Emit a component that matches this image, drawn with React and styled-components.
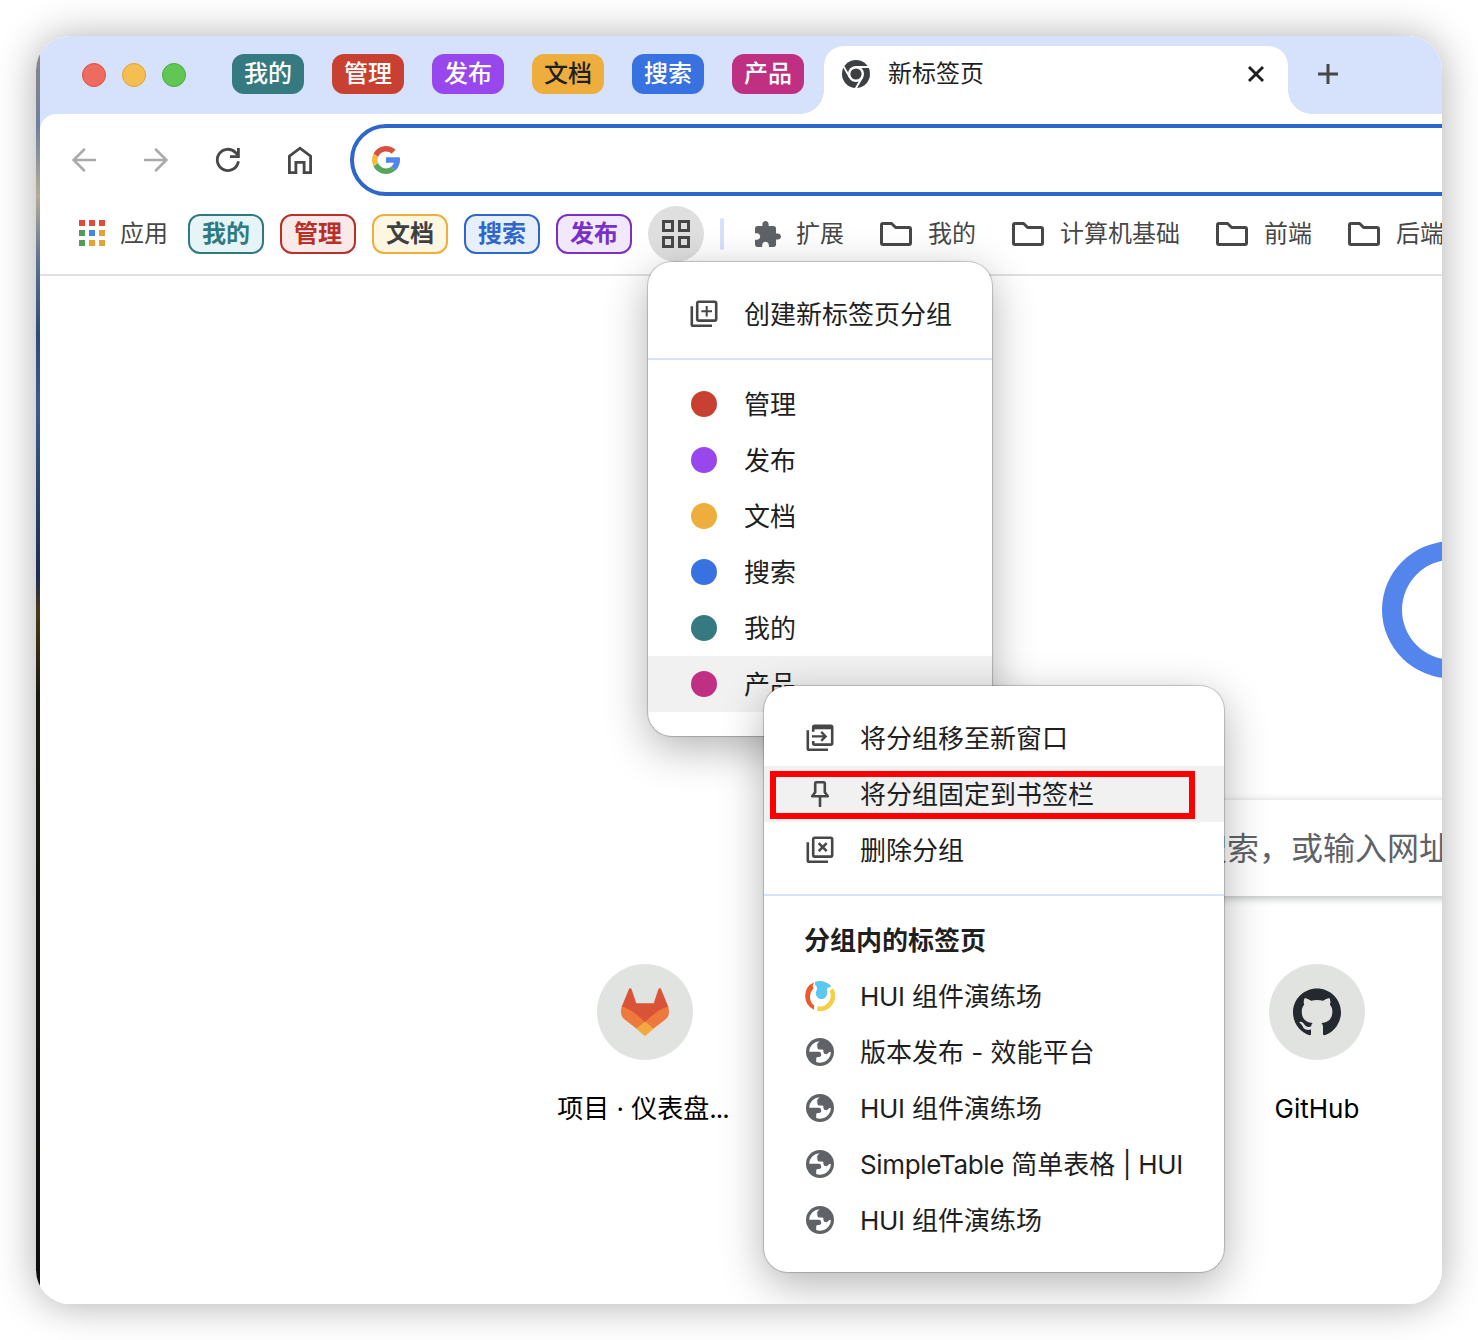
import React from "react";
import styled, { createGlobalStyle, css } from "styled-components";

const GlobalStyle = createGlobalStyle`
  *, *::before, *::after { box-sizing: border-box; }
  body {
    margin: 0;
    background: #fff;
    font-family: Inter, "Noto Sans CJK SC", sans-serif;
    color: #1f1f1f;
  }
  svg { display: block; flex: none; }
`;

const groups = {
  mine: { name: "我的", solid: "#357a80", line: "#2f7a80", text: "#2f7a80", tint: "#e6f4f8" },
  manage: { name: "管理", solid: "#c84031", line: "#b93028", text: "#b93028", tint: "#f9e9e8" },
  release: { name: "发布", solid: "#9747eb", line: "#7830c6", text: "#7830c6", tint: "#f2e8fb" },
  docs: { name: "文档", solid: "#edae3e", line: "#edae3e", text: "#3c4043", tint: "#fdf6e1", ink: "#1f1f1f" },
  search: { name: "搜索", solid: "#3871e0", line: "#2f66cc", text: "#2f66cc", tint: "#e8effc" },
  product: { name: "产品", solid: "#c03082", line: "#c03082", text: "#c03082", tint: "#fbe8f3" },
};

const Desktop = styled.div`
  height: 1340px;
  padding: 36px;
  overflow: hidden;
`;

const WindowFrame = styled.div`
  position: relative;
  width: 1406px;
  height: 1268px;
  padding-left: 4px;
  border-radius: 34px;
  overflow: hidden;
  background: linear-gradient(
    to bottom,
    #85888a 20px, #6f7f9c 90px, #b5ac98 160px, #5e718f 225px, #2d4a7c 300px,
    #3b5c8f 370px, #1c2d55 540px, #4a3a18 575px, #1c1a10 660px, #14140f 900px, #0c0e0b
  ) 0 0 / 4px 100% no-repeat;
`;

const WindowShadow = styled.div`
  width: 1406px;
  border-radius: 34px;
  box-shadow: 0 1px 40px rgba(0, 0, 0, 0.32);
`;

const Browser = styled.div`
  display: flex;
  flex-direction: column;
  width: 1402px;
  height: 100%;
  background: #fff;
`;

const TabStrip = styled.div`
  display: flex;
  flex: none;
  height: 78px;
  padding-left: 42px;
  background: #d6e1fc;
`;

const TrafficLights = styled.div`
  display: flex;
  gap: 16px;
  padding-top: 27px;
  margin-right: 46px;
`;

const Light = styled.span`
  width: 24px;
  height: 24px;
  border-radius: 50%;
  background: ${(p) => p.$fill};
  border: 1px solid ${(p) => p.$edge};
`;

const GroupChips = styled.div`
  display: flex;
  gap: 28px;
  padding-top: 18px;
  margin-right: 20px;
`;

const TabChip = styled.div`
  width: 72px;
  height: 40px;
  border-radius: 12px;
  background: ${(p) => p.$bg};
  color: ${(p) => p.$ink || "#fff"};
  font-size: 24px;
  font-weight: 500;
  line-height: 39px;
  text-align: center;
`;

const ActiveTab = styled.div`
  position: relative;
  display: flex;
  align-items: center;
  width: 464px;
  height: 68px;
  margin-top: 10px;
  padding: 0 22px 12px 18px;
  border-radius: 20px 20px 0 0;
  background: #fff;

  &::before, &::after {
    content: "";
    position: absolute;
    bottom: 0;
    width: 24px;
    height: 24px;
  }
  &::before {
    left: -24px;
    background: radial-gradient(circle at 0 0, transparent 23.5px, #fff 24.2px);
  }
  &::after {
    right: -24px;
    background: radial-gradient(circle at 100% 0, transparent 23.5px, #fff 24.2px);
  }
`;

const TabTitle = styled.span`
  flex: 1;
  margin-left: 18px;
  font-size: 24px;
  line-height: 36px;
`;

const NewTab = styled.div`
  padding: 28px 0 0 30px;
`;

const Chrome = styled.div`
  flex: none;
  background: #d6e1fc;
`;

const ToolbarArea = styled.div`
  height: 162px;
  border-radius: 16px 0 0 0;
  background: #fff;
  border-bottom: 2px solid #e0e0e0;
`;

const NavRow = styled.div`
  display: flex;
  align-items: center;
  height: 92px;
  padding-left: 28px;
`;

const NavIcons = styled.div`
  display: flex;
  gap: 40px;
  margin-right: 34px;
`;

const Omnibox = styled.div`
  display: flex;
  align-items: center;
  flex: none;
  width: 1200px;
  height: 72px;
  padding-left: 18px;
  border: 4px solid #2f66cc;
  border-radius: 36px;
  background: #fff;
`;

const BookmarksBar = styled.div`
  display: flex;
  align-items: center;
  height: 56px;
  padding-left: 38px;
  white-space: nowrap;
`;

const BookmarkLabel = styled.span`
  flex: none;
  margin-left: ${(p) => p.$gap || 16}px;
  margin-right: ${(p) => p.$after || 36}px;
  font-size: 24px;
  line-height: 36px;
  color: #474747;
`;

const SavedChips = styled.div`
  display: flex;
  flex: none;
  gap: 16px;
`;

const SavedChip = styled.div`
  width: 76px;
  height: 40px;
  border: 2px solid ${(p) => p.$line};
  border-radius: 12px;
  background: ${(p) => p.$bg};
  color: ${(p) => p.$ink};
  font-size: 24px;
  font-weight: 600;
  line-height: 35px;
  text-align: center;
`;

const EverythingButton = styled.div`
  display: grid;
  place-items: center;
  flex: none;
  width: 56px;
  height: 56px;
  margin: 0 16px;
  border-radius: 50%;
  background: #dfdfdf;
`;

const BarDivider = styled.span`
  flex: none;
  width: 4px;
  height: 32px;
  margin-right: 31px;
  border-radius: 2px;
  background: #d6e1fc;
`;

const Page = styled.div`
  flex: 1;
  display: flex;
  flex-direction: column;
  padding-top: 264px;
`;

const LogoRow = styled.div`
  height: 260px;
  padding-left: 1340px;
`;

const SearchBox = styled.div`
  display: flex;
  align-items: center;
  justify-content: flex-end;
  flex: none;
  width: 631px;
  height: 96px;
  margin-left: 780px;
  padding-bottom: 4px;
  background: #fff;
  box-shadow: 0 2px 8px rgba(32, 33, 36, 0.32);
  font-size: 32px;
  color: #5f6368;
  white-space: nowrap;
`;

const Shortcuts = styled.div`
  display: grid;
  grid-template-columns: 224px 224px;
  column-gap: 448px;
  margin: 68px 0 0 493px;
`;

const Shortcut = styled.div`
  display: flex;
  flex-direction: column;
  align-items: center;
  gap: 30px;
  font-size: 26px;
  line-height: 38px;
  color: #000;
`;

const ShortcutLabel = styled.span`
  padding-right: ${(p) => (p.$clipped ? 4 : 0)}px;
`;

const Ellipsis = styled.span`
  letter-spacing: -1px;
`;

const ShortcutIcon = styled.div`
  display: grid;
  place-items: center;
  width: 96px;
  height: 96px;
  border-radius: 50%;
  background: #e1e3e1;
`;

const menuBox = css`
  position: absolute;
  padding: 24px 0;
  border-radius: 24px;
  background: #fff;
  box-shadow: 0 0 1px 1px rgba(0, 0, 0, 0.2), 0 12px 44px rgba(0, 0, 0, 0.3);
`;

const GroupsMenu = styled.div`
  ${menuBox}
  left: 612px;
  top: 226px;
  width: 344px;
`;

const GroupSubmenu = styled.div`
  ${menuBox}
  left: 728px;
  top: 650px;
  width: 460px;
`;

const MenuItem = styled.div`
  display: flex;
  align-items: center;
  height: 56px;
  padding-left: 40px;
  background: ${(p) => (p.$hover ? "#f1f1f1" : "transparent")};
`;

const IconSlot = styled.span`
  display: grid;
  place-items: center;
  width: 32px;
  margin-right: 24px;
`;

const MenuText = styled.span`
  padding-top: 2px;
  font-size: 26px;
  line-height: 38px;
  white-space: nowrap;
`;

const MenuHeading = styled(MenuText)`
  font-weight: 700;
`;

const Latin = styled.span`
  letter-spacing: -0.36px;
`;

const Dot = styled.span`
  width: 26px;
  height: 26px;
  border-radius: 50%;
  background: ${(p) => p.$color};
`;

const MenuDivider = styled.div`
  height: 2px;
  margin: 16px 0;
  background: #d6e1fc;
`;

const Highlight = styled.div`
  position: absolute;
  left: 6px;
  top: 85px;
  width: 425px;
  height: 48px;
  border: 6px solid #ff0000;
`;

const ChromeMark = () => (
  <svg width="28" height="28" viewBox="0 0 28 28">
    <circle cx="14" cy="14" r="14" fill="#3c4043" />
    <circle cx="14" cy="14" r="8" fill="#fff" />
    <g stroke="#fff" strokeWidth="1.9">
      <path d="M14 7H28" />
      <path d="M14 7H28" transform="rotate(120 14 14)" />
      <path d="M14 7H28" transform="rotate(240 14 14)" />
    </g>
    <circle cx="14" cy="14" r="5.6" fill="#3c4043" />
  </svg>
);

const CloseIcon = () => (
  <svg width="20" height="20" viewBox="0 0 20 20" stroke="#1f1f1f" strokeWidth="2.9">
    <path d="M3 3L17 17M17 3L3 17" />
  </svg>
);

const PlusIcon = () => (
  <svg width="20" height="20" viewBox="0 0 20 20" stroke="#474747" strokeWidth="3">
    <path d="M10 0V20M0 10H20" />
  </svg>
);

const ArrowIcon = ({ flip }) => (
  <svg width="32" height="32" viewBox="0 0 32 32" fill="none" stroke="#a9a9a9" strokeWidth="2.7">
    <g transform={flip ? "rotate(180 16 16)" : undefined}>
      <path d="M28 16H6M16.800 4.900L5.700 16L16.800 27.100" />
    </g>
  </svg>
);

const ReloadIcon = () => (
  <svg width="32" height="32" viewBox="0 0 32 32" fill="none" stroke="#474747" strokeWidth="2.800">
    <path d="M26.400 17.300A10.600 10.600 0 1 1 23.500 8.500L26 11.400" />
    <path d="M26.400 4V12.600H18" />
  </svg>
);

const HomeIcon = () => (
  <svg width="32" height="32" viewBox="0 0 32 32" fill="none" stroke="#474747" strokeWidth="2.800">
    <path d="M5.400 28.600V12.200L16 4.200L26.600 12.200V28.600H20.100V18.300H11.900V28.600Z" />
  </svg>
);

const GoogleMark = () => (
  <svg width="28" height="28" viewBox="4 4 40 40">
    <path fill="#5086ec" d="M43.600 20.100H24v8h11.300c-.8 2.200-2.200 4.200-4.100 5.600l6.200 5.200C37 39.200 44 34 44 24c0-1.300-.1-2.600-.4-3.900z" />
    <path fill="#58a55c" d="M24 44c5.200 0 9.900-2 13.400-5.200l-6.200-5.200C29.200 35.100 26.700 36 24 36c-5.200 0-9.600-3.300-11.300-8l-6.500 5C9.500 39.600 16.200 44 24 44z" />
    <path fill="#f1be42" d="M12.700 28A12 12 0 0 1 12.700 19.900L6.300 14.700A20 20 0 0 0 6.200 33z" />
    <path fill="#d85140" d="M6.300 14.700l6.500 4.900C14.700 15.100 19 12 24 12c3.100 0 5.800 1.200 8 3l5.700-5.700C34 6.100 29.300 4 24 4 16.300 4 9.700 8.300 6.300 14.700z" />
  </svg>
);

const appColors = [
  "#e24a3b", "#e24a3b", "#e24a3b",
  "#519c5c", "#4285f0", "#e5a337",
  "#519c5c", "#e5a337", "#e5a337",
];

const AppsIcon = () => (
  <svg width="28" height="28" viewBox="0 0 28 28">
    {appColors.map((fill, i) => (
      <rect key={i} x={1 + (i % 3) * 10} y={Math.floor(i / 3) * 10} width="6" height="6" fill={fill} />
    ))}
  </svg>
);

const FourSquares = () => (
  <svg width="28" height="28" viewBox="0 0 28 28" fill="none" stroke="#474747" strokeWidth="3">
    <path d="M1.500 1.500h9v9h-9zM17.500 1.500h9v9h-9zM1.500 17.500h9v9h-9zM17.500 17.500h9v9h-9z" />
  </svg>
);

const PuzzleIcon = () => (
  <svg width="26" height="26" viewBox="2 1 21 21" fill="#5f6368">
    <path d="M20.500 11H19V7c0-1.100-.9-2-2-2h-4V3.500C13 2.120 11.880 1 10.500 1S8 2.120 8 3.500V5H4c-1.100 0-1.990.9-1.990 2v3.800H3.500c1.490 0 2.700 1.210 2.700 2.700s-1.210 2.700-2.700 2.700H2V20c0 1.100.9 2 2 2h3.800v-1.500c0-1.490 1.210-2.700 2.700-2.700 1.490 0 2.700 1.210 2.700 2.700V22H17c1.100 0 2-.9 2-2v-4h1.500c1.380 0 2.500-1.120 2.500-2.500S21.880 11 20.500 11z" />
  </svg>
);

const FolderIcon = () => (
  <svg width="32" height="24" viewBox="0 0 32 24" fill="none" stroke="#474747" strokeWidth="3" strokeLinejoin="round">
    <path d="M3 1.500H11.600L15.600 5.500H29Q30.500 5.500 30.500 7V21Q30.500 22.500 29 22.500H3Q1.500 22.500 1.500 21V3Q1.500 1.500 3 1.500Z" />
  </svg>
);

const StackIcon = ({ children }) => (
  <svg width="28" height="28" viewBox="0 0 28 28" fill="none" stroke="#474747" strokeWidth="2.600">
    <path d="M1.800 6.200V24.500Q1.800 25.800 3.100 25.800H22" />
    {children}
  </svg>
);

const AddGroupIcon = () => (
  <StackIcon>
    <rect x="7.200" y="1.800" width="19" height="18.800" rx="1.600" />
    <path d="M16.700 6V16.600M11.400 11.300H22" strokeWidth="2" />
  </StackIcon>
);

const MoveGroupIcon = () => (
  <StackIcon>
    <path d="M7.200 7.800V3.200Q7.200 1.800 8.600 1.800H24.800Q26.200 1.800 26.200 3.200V19.200Q26.200 20.600 24.800 20.600H8.600Q7.200 20.600 7.200 19.200V17" />
    <path d="M7.200 3.300H26.200" strokeWidth="4" />
    <path d="M6 12.400H19.500M15.200 7.900L19.700 12.400L15.200 16.900" strokeWidth="2.300" />
  </StackIcon>
);

const DeleteGroupIcon = () => (
  <StackIcon>
    <rect x="7.200" y="1.800" width="19" height="18.800" rx="1.600" />
    <path d="M12.700 7.200L20.700 15.200M20.700 7.200L12.700 15.200" />
  </StackIcon>
);

const PinIcon = () => (
  <svg width="28" height="28" viewBox="0 0 28 28" fill="none" stroke="#474747" strokeWidth="2.600" strokeLinejoin="round">
    <path d="M9.200 3.400Q9.200 2.200 10.400 2.200H17.600Q18.800 2.200 18.800 3.400V12.300L21.800 16.300H6.200L9.200 12.300Z" />
    <path d="M14 16V27" />
  </svg>
);

const GlobeIcon = () => (
  <svg width="28" height="28" viewBox="0 0 28 28">
    <circle cx="14" cy="14" r="14" fill="#5f6368" />
    <path
      fill="#fff"
      d="M3.200 13.800A10.800 10.800 0 0 1 14 3.300C11.800 4.300 10.900 6 11.300 8.300C11.300 10.600 12 11.400 13.400 11.500H16.200C17.600 11.600 17.400 12.800 17.500 14C17.700 15.600 18.600 16.200 20.400 16.200C21.700 16.200 21.900 14.200 24.800 13.700A10.800 10.800 0 0 1 10.200 24V21C10.200 19.800 10.600 19.200 12 19.100C14.200 19 15.300 18.400 15.200 16.500C15.100 14.800 14.300 13.800 12.500 13.800Z"
    />
  </svg>
);

const HuiMark = () => (
  <svg width="30" height="30" viewBox="0 0 30 30">
    <path fill="#ea5a2c" d="M9.300 1.200A15 15 0 0 0 9 28.700L9.200 24.600A11.500 11.500 0 0 1 8.600 7.400L7.600 4.800Z" />
    <path fill="#f7cf46" d="M28 7.300A15 15 0 0 1 12 29.700L12.600 25.200A10.800 10.800 0 0 0 24.600 9.900Z" />
    <path fill="#5cc8f2" d="M10 .9A15 15 0 0 1 26.200 4.800L24.400 6.700C22.600 6.200 21.600 7.200 22 9.200C23.200 13.500 20.800 18 16.400 18C12 18 9.800 13.700 11.400 10C12.400 7.500 12.300 5.300 10.100 4Z" />
  </svg>
);

const GitlabMark = () => (
  <svg width="48" height="48" viewBox="0 0 48 48">
    <path fill="#d95436" d="M8.200 .6Q9.300 -.4 10.400 .8L15.300 15.300H32.700L37.600 .8Q38.700 -.4 39.800 .6L47.400 19L24 36L.6 19Z" />
    <path fill="#ed7a3c" d="M.8 18.500C8.500 20.500 17 27 24 34.300L16 41L3 31C-.6 28 -.4 22.500 .8 18.500Z" />
    <path fill="#ed7a3c" d="M47.200 18.500C39.500 20.500 31 27 24 34.300L32 41L45 31C48.600 28 48.400 22.500 47.200 18.500Z" />
    <path fill="#f0aa41" d="M24 33.600L32.700 40.700L24.900 47.400Q24 48 23.100 47.400L15.300 40.700Z" />
  </svg>
);

const GithubMark = () => (
  <svg width="48" height="48" viewBox="0 0 16 15.700" fill="#24292f">
    <path d="M8 0C3.580 0 0 3.580 0 8c0 3.540 2.290 6.530 5.470 7.590.4.070.55-.17.55-.38 0-.19-.01-.82-.01-1.490-2.010.37-2.530-.49-2.690-.94-.09-.23-.48-.94-.82-1.130-.28-.15-.68-.52-.01-.53.63-.01 1.080.58 1.230.82.72 1.210 1.870.87 2.330.66.07-.52.28-.87.51-1.070-1.780-.2-3.640-.89-3.640-3.950 0-.87.31-1.590.82-2.150-.08-.2-.36-1.020.08-2.120 0 0 .67-.21 2.200.82.64-.18 1.320-.27 2-.27s1.360.09 2 .27c1.530-1.040 2.200-.82 2.200-.82.44 1.100.16 1.920.08 2.120.51.56.82 1.270.82 2.150 0 3.070-1.870 3.750-3.650 3.950.29.25.54.73.54 1.480 0 1.070-.01 1.930-.01 2.200 0 .21.15.46.55.38A8.010 8.010 0 0 0 16 8c0-4.420-3.580-8-8-8z" />
  </svg>
);

const LogoArc = () => (
  <svg width="140" height="140" viewBox="0 0 140 140" fill="none">
    <path
      fill="#5485ed"
      fillRule="evenodd"
      d="M2 69.800a70 68.700 0 1 0 140 0a70 68.700 0 1 0 -140 0ZM22 69.800a50 50 0 1 0 100 0a50 50 0 1 0 -100 0Z"
    />
  </svg>
);

const stripOrder = ["mine", "manage", "release", "docs", "search", "product"];
const savedOrder = ["mine", "manage", "docs", "search", "release"];
const menuOrder = ["manage", "release", "docs", "search", "mine", "product"];
const folders = ["我的", "计算机基础", "前端", "后端"];
const groupTabs = [
  { title: "HUI 组件演练场", Icon: HuiMark },
  { title: "版本发布 - 效能平台", Icon: GlobeIcon },
  { title: "HUI 组件演练场", Icon: GlobeIcon },
  { title: "SimpleTable 简单表格 | HUI", Icon: GlobeIcon },
  { title: "HUI 组件演练场", Icon: GlobeIcon },
];

const withLatinRuns = (text) =>
  text.split(/([A-Za-z|]+)/).map((run, i) => (i % 2 ? <Latin key={i}>{run}</Latin> : run));

const Item = ({ icon, hover, label }) => (
  <MenuItem $hover={hover}>
    <IconSlot>{icon}</IconSlot>
    <MenuText>{withLatinRuns(label)}</MenuText>
  </MenuItem>
);

export default function App() {
  return (
    <Desktop>
      <GlobalStyle />
      <WindowShadow>
        <WindowFrame>
          <Browser>
            <TabStrip>
              <TrafficLights>
                <Light $fill="#ed6b5f" $edge="#dd5045" />
                <Light $fill="#f4be50" $edge="#dfa23a" />
                <Light $fill="#61c654" $edge="#4aac3a" />
              </TrafficLights>
              <GroupChips>
                {stripOrder.map((id) => (
                  <TabChip key={id} $bg={groups[id].solid} $ink={groups[id].ink}>
                    {groups[id].name}
                  </TabChip>
                ))}
              </GroupChips>
              <ActiveTab>
                <ChromeMark />
                <TabTitle>新标签页</TabTitle>
                <CloseIcon />
              </ActiveTab>
              <NewTab>
                <PlusIcon />
              </NewTab>
            </TabStrip>

            <Chrome>
              <ToolbarArea>
                <NavRow>
                  <NavIcons>
                    <ArrowIcon />
                    <ArrowIcon flip />
                    <ReloadIcon />
                    <HomeIcon />
                  </NavIcons>
                  <Omnibox>
                    <GoogleMark />
                  </Omnibox>
                </NavRow>
                <BookmarksBar>
                  <AppsIcon />
                  <BookmarkLabel $gap={14} $after={20}>应用</BookmarkLabel>
                  <SavedChips>
                    {savedOrder.map((id) => (
                      <SavedChip key={id} $line={groups[id].line} $bg={groups[id].tint} $ink={groups[id].text}>
                        {groups[id].name}
                      </SavedChip>
                    ))}
                  </SavedChips>
                  <EverythingButton>
                    <FourSquares />
                  </EverythingButton>
                  <BarDivider />
                  <PuzzleIcon />
                  <BookmarkLabel $gap={15}>扩展</BookmarkLabel>
                  {folders.map((name) => (
                    <React.Fragment key={name}>
                      <FolderIcon />
                      <BookmarkLabel>{name}</BookmarkLabel>
                    </React.Fragment>
                  ))}
                </BookmarksBar>
              </ToolbarArea>
            </Chrome>

            <Page>
              <LogoRow>
                <LogoArc />
              </LogoRow>
              <SearchBox>在 Google 中搜索，或输入网址</SearchBox>
              <Shortcuts>
                <Shortcut>
                  <ShortcutIcon>
                    <GitlabMark />
                  </ShortcutIcon>
                  <ShortcutLabel $clipped>
                    项目 · 仪表盘<Ellipsis>...</Ellipsis>
                  </ShortcutLabel>
                </Shortcut>
                <Shortcut>
                  <ShortcutIcon>
                    <GithubMark />
                  </ShortcutIcon>
                  <ShortcutLabel>GitHub</ShortcutLabel>
                </Shortcut>
              </Shortcuts>
            </Page>
          </Browser>

          <GroupsMenu>
            <Item icon={<AddGroupIcon />} label="创建新标签页分组" />
            <MenuDivider />
            {menuOrder.map((id) => (
              <Item
                key={id}
                hover={id === "product"}
                icon={<Dot $color={groups[id].solid} />}
                label={groups[id].name}
              />
            ))}
          </GroupsMenu>

          <GroupSubmenu>
            <Item icon={<MoveGroupIcon />} label="将分组移至新窗口" />
            <Item hover icon={<PinIcon />} label="将分组固定到书签栏" />
            <Item icon={<DeleteGroupIcon />} label="删除分组" />
            <MenuDivider />
            <MenuItem>
              <MenuHeading>分组内的标签页</MenuHeading>
            </MenuItem>
            {groupTabs.map(({ title, Icon }, i) => (
              <Item key={i} icon={<Icon />} label={title} />
            ))}
            <Highlight />
          </GroupSubmenu>
        </WindowFrame>
      </WindowShadow>
    </Desktop>
  );
}
